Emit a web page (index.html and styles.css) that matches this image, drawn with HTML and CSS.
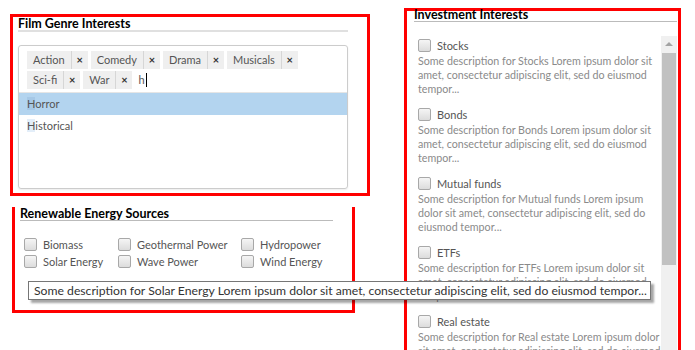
FILE: index.html
```html
<!DOCTYPE html>
<html lang="en">
<head>
    <meta charset="UTF-8">
    <title>Interests</title>
    <link rel="stylesheet" href="styles.css">
</head>
<body>
<div class="page">

    <div class="left-col">
        <section class="panel film">
            <h3 class="legend">Film Genre Interests</h3>
            <div class="multiselect">
                <div class="tags">
                    <span class="tag"><span class="tag-text">Action</span><span class="tag-x">&#215;</span></span>
                    <span class="tag"><span class="tag-text">Comedy</span><span class="tag-x">&#215;</span></span>
                    <span class="tag"><span class="tag-text">Drama</span><span class="tag-x">&#215;</span></span>
                    <span class="tag"><span class="tag-text">Musicals</span><span class="tag-x">&#215;</span></span>
                    <span class="tag"><span class="tag-text">Sci-fi</span><span class="tag-x">&#215;</span></span>
                    <span class="tag"><span class="tag-text">War</span><span class="tag-x">&#215;</span></span>
                    <span class="typed">h<span class="caret"></span></span>
                </div>
                <ul class="options">
                    <li class="active"><mark>H</mark>orror</li>
                    <li><mark>H</mark>istorical</li>
                </ul>
            </div>
        </section>

        <section class="panel energy">
            <h3 class="legend">Renewable Energy Sources</h3>
            <div class="check-grid">
                <label class="check"><span class="box"></span>Biomass</label>
                <label class="check"><span class="box"></span>Geothermal Power</label>
                <label class="check"><span class="box"></span>Hydropower</label>
                <label class="check"><span class="box"></span>Solar Energy</label>
                <label class="check"><span class="box"></span>Wave Power</label>
                <label class="check"><span class="box"></span>Wind Energy</label>
            </div>
        </section>
    </div>

    <section class="panel invest">
        <h3 class="legend">Investment Interests</h3>
        <div class="scroll">
            <div class="scroll-list">
                <div class="item">
                    <label class="check"><span class="box"></span>Stocks</label>
                    <p class="desc">Some description for Stocks Lorem ipsum dolor sit amet, consectetur adipiscing elit, sed do eiusmod tempor...</p>
                </div>
                <div class="item">
                    <label class="check"><span class="box"></span>Bonds</label>
                    <p class="desc">Some description for Bonds Lorem ipsum dolor sit amet, consectetur adipiscing elit, sed do eiusmod tempor...</p>
                </div>
                <div class="item">
                    <label class="check"><span class="box"></span>Mutual funds</label>
                    <p class="desc">Some description for Mutual funds Lorem ipsum dolor sit amet, consectetur adipiscing elit, sed do eiusmod tempor...</p>
                </div>
                <div class="item">
                    <label class="check"><span class="box"></span>ETFs</label>
                    <p class="desc">Some description for ETFs Lorem ipsum dolor sit amet, consectetur adipiscing elit, sed do eiusmod tempor...</p>
                </div>
                <div class="item">
                    <label class="check"><span class="box"></span>Real estate</label>
                    <p class="desc">Some description for Real estate Lorem ipsum dolor sit amet, consectetur adipiscing elit, sed do eiusmod tempor...</p>
                </div>
            </div>
            <div class="scrollbar">
                <span class="arrow"></span>
                <span class="thumb"></span>
            </div>
        </div>
    </section>

    <!-- native title tooltip for Solar Energy -->
    <div class="tooltip">Some description for Solar Energy Lorem ipsum dolor sit amet, consectetur adipiscing elit, sed do eiusmod tempor...</div>
</div>
</body>
</html>
```

FILE: styles.css
```css
html, body {
    margin: 0;
    height: 100%;
    overflow: hidden;
    background: #fff;
}
body {
    font-family: Lato, "Open Sans", Arial, sans-serif;
    font-size: 11px;
    color: #555;
}
.page {
    position: relative;
    display: flex;
    align-items: flex-start;
    height: 350px;
    overflow: hidden;
}
.left-col {
    margin-left: 10px;
    margin-top: 14px;
    width: 360px;
}
.panel {
    box-sizing: border-box;
    border: 3px solid #f00;
}
.legend {
    margin: 0;
    font-size: 12.5px;
    font-weight: bold;
    color: #000;
    line-height: 13px;
    border-bottom: 1px solid #bbb;
}

/* film genres */
.film {
    height: 182px;
    padding: 0 19px 0 5px;
}
.film .legend {
    border-bottom: 2px solid #e0e0e0;
}
.multiselect {
    margin-top: 13px;
    height: 144px;
    box-sizing: border-box;
    border: 1px solid #ccc;
    border-radius: 3px;
    box-shadow: 0 1px 2px rgba(0, 0, 0, 0.08);
}
.tags {
    display: flex;
    flex-wrap: wrap;
    gap: 2px 3px;
    padding: 5px 8px 3px;
    border-bottom: 1px solid #e5e5e5;
}
.tag {
    display: flex;
    height: 18px;
    line-height: 18px;
    background: #efefef;
}
.tag-text {
    padding: 0 6px;
    border-right: 1px solid #d6d6d6;
}
.tag-x {
    width: 16px;
    text-align: center;
    font-size: 11px;
    font-weight: bold;
    color: #333;
}
.typed {
    line-height: 18px;
    padding-left: 3px;
    color: #555;
}
.caret {
    display: inline-block;
    width: 1px;
    height: 14px;
    margin-left: 1px;
    vertical-align: -3px;
    background: #000;
}
.options {
    list-style: none;
    margin: 0;
    padding: 0;
}
.options li {
    height: 22px;
    line-height: 22px;
    padding-left: 8px;
}
.options li.active {
    background: #b3d4ef;
}
.options mark {
    background: #e3eef9;
    color: inherit;
}
.options li.active mark {
    background: #a6c8e6;
}

/* energy */
.energy {
    width: 343px;
    height: 106px;
    margin-left: 2px;
    margin-top: 11px;
    border-top: none;
    padding: 0 19px 0 5px;
}
.check-grid {
    display: grid;
    grid-template-columns: 94px 123px 1fr;
    margin: 15px 0 0 4px;
}
.check {
    display: flex;
    align-items: center;
    gap: 6px;
    height: 17px;
    white-space: nowrap;
}
.box {
    flex: none;
    width: 13px;
    height: 13px;
    box-sizing: border-box;
    border: 1px solid #a8a8a8;
    border-radius: 2px;
    background: linear-gradient(#f5f5f5, #dcdcdc);
}

/* investments */
.invest {
    margin-left: 34px;
    margin-top: 8px;
    width: 277px;
    height: 360px;
    padding: 0 1px 0 7px;
}
.invest .legend {
    margin-top: -3px;
}
.scroll {
    display: flex;
    margin-top: 14px;
    height: 320px;
}
.scroll-list {
    flex: 1;
    padding: 0 0 0 4px;
}
.item {
    margin-bottom: 9px;
}
.item .check {
    height: 18px;
}
.desc {
    margin: 0;
    font-size: 10.7px;
    line-height: 14px;
    color: #8a8a8a;
}
.scrollbar {
    position: relative;
    width: 16px;
    background: #f0f0f0;
}
.arrow {
    display: block;
    margin: 6px auto 0;
    width: 0;
    height: 0;
    border-left: 4px solid transparent;
    border-right: 4px solid transparent;
    border-bottom: 4px solid #a3a3a3;
}
.thumb {
    display: block;
    margin: 7px 1px 0 1px;
    height: 212px;
    background: #c1c1c1;
}

/* tooltip */
.tooltip {
    position: absolute;
    left: 28px;
    top: 281px;
    width: 623px;
    height: 19px;
    box-sizing: border-box;
    padding-left: 5px;
    line-height: 17px;
    font-size: 12.2px;
    color: #333;
    background: #fff;
    border: 1px solid #767676;
    box-shadow: 3px 3px 2px rgba(0, 0, 0, 0.35);
    white-space: nowrap;
    overflow: hidden;
}
```
